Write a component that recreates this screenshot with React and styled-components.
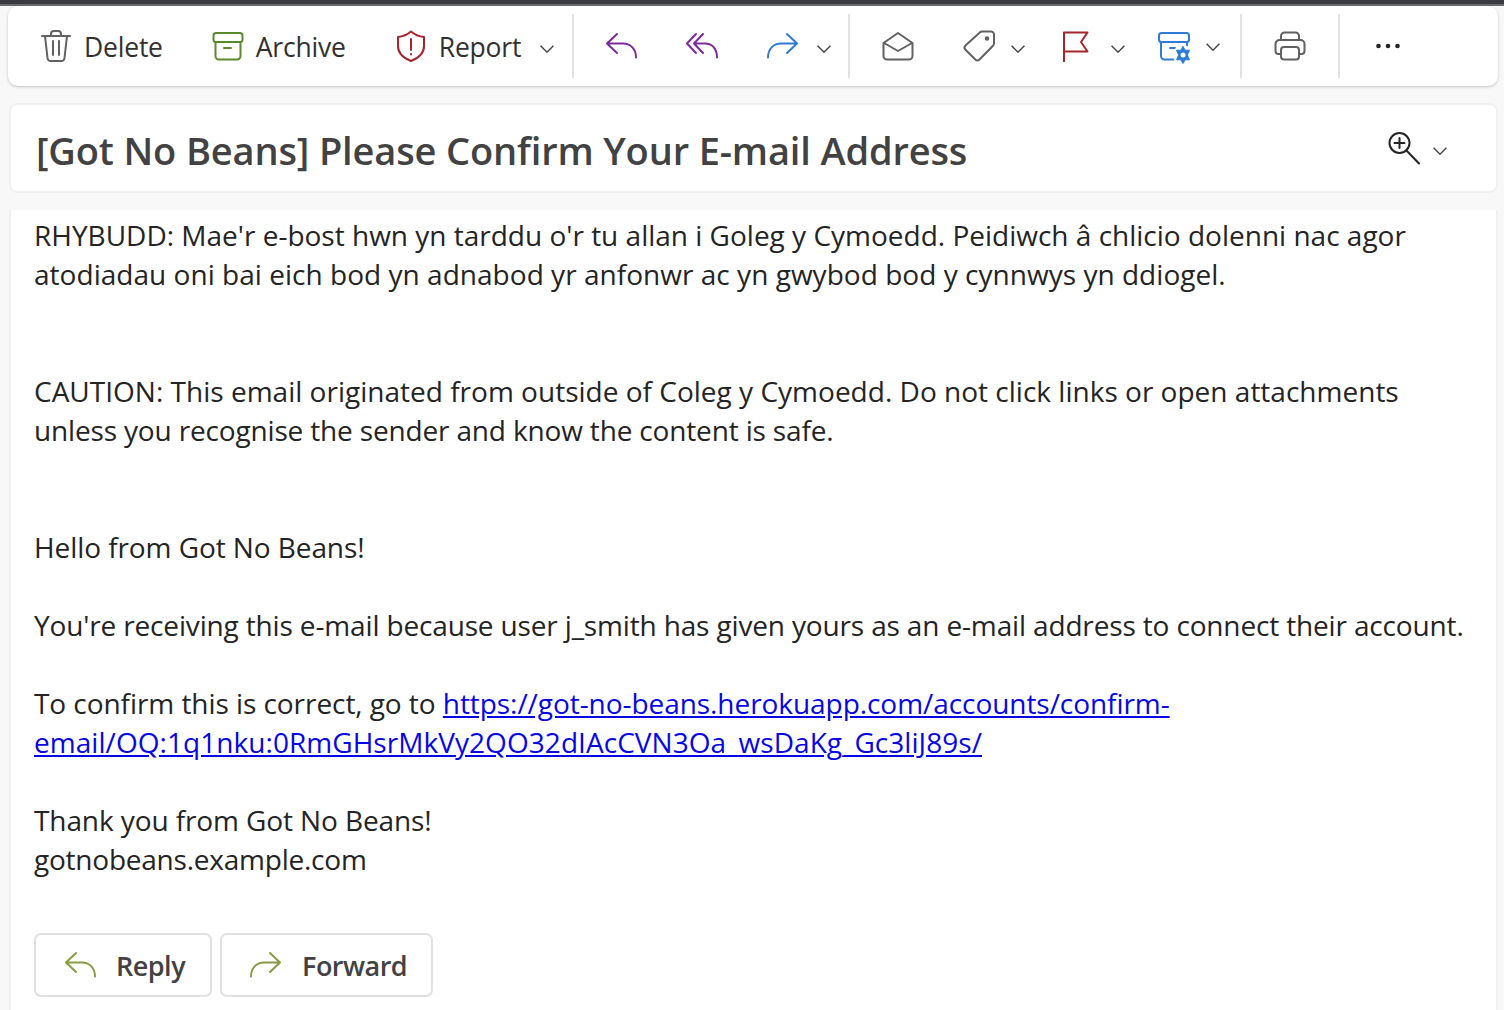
import React from 'react'
import styled, { createGlobalStyle } from 'styled-components'

const GlobalStyle = createGlobalStyle`
  html, body { margin: 0; padding: 0; background: #f8f8f8; }
  body { font-family: "Open Sans", "Noto Sans", sans-serif; }
`

const Page = styled.div`
  width: 1504px;
  height: 1010px;
  overflow: hidden;
  background: #f8f8f8;
  display: flex;
  flex-direction: column;
`

const TopStrip = styled.div`
  height: 4px;
  flex: none;
  background: #3a3b40;
  border-bottom: 2px solid #6a6b6e;
`

const Toolbar = styled.div`
  flex: none;
  height: 80px;
  margin: 0 6px 0 8px;
  background: #fff;
  border-radius: 10px;
  box-shadow: 0 1px 3px rgba(0, 0, 0, 0.22);
  display: flex;
  align-items: stretch;
`

const Group = styled.div`
  height: 64px;
  margin-top: 8px;
  padding: 0 ${p => p.$right}px 0 ${p => p.$left}px;
  display: flex;
  align-items: center;
  border-right: ${p => (p.$last ? 'none' : '2px solid #e3e3e3')};
`

const ToolItem = styled.div`
  display: flex;
  align-items: center;
  gap: 12px;
  margin-left: ${p => p.$gap || 0}px;
`

const ToolLabel = styled.span`
  font-size: 26.5px;
  line-height: 32px;
  letter-spacing: -0.2px;
  color: #323130;
  padding-top: 2px;
`

const Icon = styled.svg`
  display: block;
  flex: none;
  width: ${p => p.$w || 32}px;
  height: 32px;
  margin-left: ${p => p.$gap || 0}px;
  overflow: visible;
  fill: none;
  stroke: ${p => p.$color};
  stroke-width: ${p => p.$sw || 2};
  stroke-linecap: round;
  stroke-linejoin: round;
`

const ChevronSvg = styled.svg`
  display: block;
  flex: none;
  width: 14px;
  height: 8px;
  margin-left: ${p => p.$gap || 0}px;
  margin-top: ${p => p.$top ?? 6}px;
  fill: none;
  stroke: #424242;
  stroke-width: 1.4;
`

const SubjectCard = styled.div`
  flex: none;
  height: 86px;
  margin: 17px 6px 0 9px;
  background: #fff;
  border: 2px solid #f1f1f1;
  border-radius: 8px;
  display: flex;
  align-items: center;
  padding: 0 49px 0 25px;
`

const SubjectTitle = styled.h1`
  flex: 1;
  margin: 3px 0 0;
  font-size: 38px;
  font-weight: 600;
  line-height: 48px;
  letter-spacing: -0.14px;
  color: #424242;
`

const MessageBody = styled.div`
  flex: 1;
  margin: 17px 6px 0 9px;
  padding: 6px 0 0 23px;
  background: #fff;
  border-left: 2px solid #f1f1f1;
  border-right: 2px solid #f1f1f1;
`

const Para = styled.p`
  margin: 0 0 ${p => p.$after || 0}px;
  font-size: 28px;
  line-height: 39px;
  letter-spacing: ${p => p.$track ?? -0.03}px;
  white-space: nowrap;
  color: #242424;
`

const MailLink = styled.a`
  color: #0606e6;
  text-decoration: underline;
`

const Actions = styled.div`
  display: flex;
  gap: 8px;
  margin-top: 54px;
`

const ActionButton = styled.button`
  width: ${p => p.$w}px;
  height: 64px;
  box-sizing: border-box;
  padding: 0 0 0 28px;
  display: flex;
  align-items: center;
  gap: 20px;
  background: #fff;
  border: 2px solid #e1e1e1;
  border-radius: 7px;
  font-family: inherit;
  font-size: 27px;
  font-weight: 600;
  letter-spacing: -0.5px;
  color: #424242;
`

const Chevron = props => (
  <ChevronSvg viewBox="0 0 14 8" {...props}>
    <path d="M.6.8 7 7.2 13.4.8" />
  </ChevronSvg>
)

const Trash = () => (
  <Icon viewBox="0 0 32 32" $color="#616161">
    <path d="M2 6h28M11 6V4a3 3 0 0 1 3-3h4a3 3 0 0 1 3 3v2M5 6l2.5 22a3 3 0 0 0 3 3h11a3 3 0 0 0 3-3L27 6M13 11v14M19 11v14" />
  </Icon>
)

const ArchiveIcon = ({ color }) => (
  <Icon viewBox="0 0 32 32" $color={color}>
    <rect x="1.5" y="3" width="29" height="9" rx="2.5" />
    <path d="M3.5 12v14a3.5 3.5 0 0 0 3.5 3.5h18a3.5 3.5 0 0 0 3.5-3.5V12M12 18h7" />
  </Icon>
)

const Shield = () => (
  <Icon viewBox="0 0 32 32" $color="#a4262c">
    <path d="M16 1.5c4 3.5 8 5 13 5.5v9c0 7-5 12-13 15C8 28 3 23 3 16V7c5-.5 9-2 13-5.5Z" />
    <path d="M16 9v11M16 24v.5" />
  </Icon>
)

const BackArrow = ({ color, gap }) => (
  <Icon viewBox="0 0 32 32" $color={color} $gap={gap}>
    <path d="M12 4 2 13.500l10 9.500M2 13.500h16c7 0 13 5 13 14" />
  </Icon>
)

const BackAllArrow = ({ color, gap }) => (
  <Icon viewBox="0 0 32 32" $color={color} $gap={gap}>
    <path d="M10 4 1 13.500l9 9.500M17 4 8 13.500l9 9.500M8 13.500h11c7 0 12 5 12 14" />
  </Icon>
)

const ForwardArrow = ({ color, gap }) => (
  <Icon viewBox="0 0 32 32" $color={color} $gap={gap}>
    <path d="M20 4l10 9.500-10 9.500M30 13.500H14c-7 0-13 5-13 14" />
  </Icon>
)

const OpenMail = () => (
  <Icon viewBox="0 0 32 32" $color="#616161">
    <path d="M1.500 13 16 3l14.500 10v13a3.500 3.500 0 0 1-3.500 3.500H5A3.500 3.500 0 0 1 1.500 26Z" />
    <path d="M2 13l14 8 14-8" />
  </Icon>
)

const TagIcon = () => (
  <Icon viewBox="0 0 32 32" $color="#616161" $gap={49}>
    <path d="M19 1.500h9a3 3 0 0 1 3 3v9a3 3 0 0 1-1 2.200L16.500 29.500a3 3 0 0 1-4.200 0L2.500 19.700a3 3 0 0 1 0-4.200L16.800 2.500A3 3 0 0 1 19 1.500Z" />
    <circle cx="24" cy="8.500" r="1.300" />
  </Icon>
)

const FlagIcon = () => (
  <Icon viewBox="0 0 25 32" $w={25} $color="#a4262c" $gap={38}>
    <path d="M1 32V2.500h23.500L18 12l6.500 9.500H1" strokeLinecap="butt" />
  </Icon>
)

const RulesIcon = () => (
  <Icon viewBox="0 0 32 32" $color="#2f7bd6" $gap={33}>
    <rect x="1" y="3" width="30" height="9" rx="2.500" />
    <path d="M3 12v14a3.500 3.500 0 0 0 3.500 3.500H16M29 12v6M12 18h5" />
    <circle cx="25" cy="25" r="10" fill="#fff" stroke="none" />
    <path
      d="M25 16.500l2.200 3.700h4.300l-2.200 4.800 2.200 4.800h-4.300L25 33.500l-2.200-3.700h-4.300l2.200-4.800-2.200-4.800h4.300Z"
      fill="#2f7bd6"
      stroke="#2f7bd6"
      strokeWidth="1"
    />
    <circle cx="25" cy="25" r="2.500" fill="#fff" stroke="none" />
  </Icon>
)

const PrintIcon = () => (
  <Icon viewBox="0 0 32 32" $color="#616161">
    <path d="M7 10V6a3.500 3.500 0 0 1 3.500-3.500h11A3.500 3.500 0 0 1 25 6v4" />
    <path d="M7 24H4.500a3 3 0 0 1-3-3v-7a4 4 0 0 1 4-4h21a4 4 0 0 1 4 4v7a3 3 0 0 1-3 3H25" />
    <rect x="7" y="17" width="18" height="12.500" rx="3" />
  </Icon>
)

const Dots = () => (
  <Icon viewBox="0 0 24 32" $w={24} $color="#242424">
    <circle cx="2.500" cy="16" r="2.300" fill="#242424" stroke="none" />
    <circle cx="12" cy="16" r="2.300" fill="#242424" stroke="none" />
    <circle cx="21.500" cy="16" r="2.300" fill="#242424" stroke="none" />
  </Icon>
)

const ZoomIcon = () => (
  <Icon viewBox="0 0 32 32" $color="#242424">
    <circle cx="11.500" cy="11" r="10" />
    <path d="M11.500 6v10M6.500 11h10M18.500 18.500 31 31.500" />
  </Icon>
)

const App = () => (
  <Page>
    <GlobalStyle />
    <TopStrip />
    <Toolbar>
      <Group $left={32} $right={18}>
        <ToolItem><Trash /><ToolLabel>Delete</ToolLabel></ToolItem>
        <ToolItem $gap={49}><ArchiveIcon color="#5a8a2c" /><ToolLabel>Archive</ToolLabel></ToolItem>
        <ToolItem $gap={49}><Shield /><ToolLabel>Report</ToolLabel></ToolItem>
        <Chevron $gap={19} />
      </Group>
      <Group $left={31} $right={17}>
        <BackArrow color="#7d2a9a" />
        <BackAllArrow color="#7d2a9a" gap={49} />
        <ForwardArrow color="#2f7bd6" gap={49} />
        <Chevron $gap={18} />
      </Group>
      <Group $left={32} $right={20}>
        <OpenMail />
        <TagIcon />
        <Chevron $gap={16} />
        <FlagIcon />
        <Chevron $gap={23} />
        <RulesIcon />
        <Chevron $gap={16} $top={2} />
      </Group>
      <Group $left={32} $right={32}>
        <PrintIcon />
      </Group>
      <Group $left={36} $right={0} $last>
        <Dots />
      </Group>
    </Toolbar>

    <SubjectCard>
      <SubjectTitle>[Got No Beans] Please Confirm Your E-mail Address</SubjectTitle>
      <ZoomIcon />
      <Chevron $gap={13} $top={6} />
    </SubjectCard>

    <MessageBody>
      <Para $track={0}>RHYBUDD: Mae'r e-bost hwn yn tarddu o'r tu allan i Goleg y Cymoedd. Peidiwch â chlicio dolenni nac agor</Para>
      <Para $after={78} $track={0.03}>atodiadau oni bai eich bod yn adnabod yr anfonwr ac yn gwybod bod y cynnwys yn ddiogel.</Para>
      <Para $track={0.01}>CAUTION: This email originated from outside of Coleg y Cymoedd. Do not click links or open attachments</Para>
      <Para $after={78} $track={-0.16}>unless you recognise the sender and know the content is safe.</Para>
      <Para $after={39} $track={-0.08}>Hello from Got No Beans!</Para>
      <Para $after={39} $track={-0.15}>You're receiving this e-mail because user j_smith has given yours as an e-mail address to connect their account.</Para>
      <Para $track={-0.06}>To confirm this is correct, go to <MailLink href="#">https://got-no-beans.herokuapp.com/accounts/confirm-</MailLink></Para>
      <Para $after={39} $track={0.05}><MailLink href="#">email/OQ:1q1nku:0RmGHsrMkVy2QO32dIAcCVN3Oa_wsDaKg_Gc3liJ89s/</MailLink></Para>
      <Para $track={-0.1}>Thank you from Got No Beans!</Para>
      <Para $track={-0.23}>gotnobeans.example.com</Para>
      <Actions>
        <ActionButton $w={178}><BackArrow color="#8a9a44" />Reply</ActionButton>
        <ActionButton $w={213}><ForwardArrow color="#8a9a44" />Forward</ActionButton>
      </Actions>
    </MessageBody>
  </Page>
)

export default App
